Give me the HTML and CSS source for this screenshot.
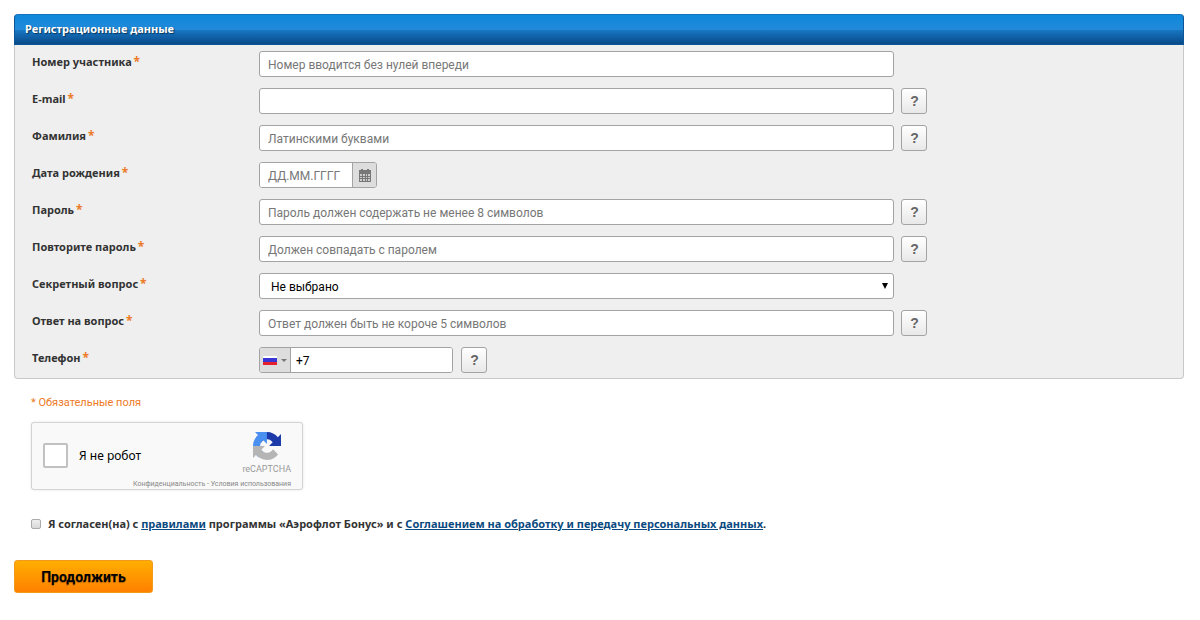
FILE: index.html
```
<!DOCTYPE html>
<html lang="ru">
<head>
  <meta charset="UTF-8" />
  <meta name="viewport" content="width=device-width, initial-scale=1.0" />
  <title>Регистрация</title>
  <link rel="stylesheet" href="styles.css">
</head>
<body>
  <form>
    <section class="panel">
      <h1 class="panel-title">Регистрационные данные</h1>
      <div class="panel-body">
        <div class="row">
          <label class="label" for="number">Номер участника <span class="req">*</span></label>
          <input class="field" type="text" id="number" placeholder="Номер вводится без нулей впереди">
        </div>
        <div class="row">
          <label class="label" for="email">E-mail <span class="req">*</span></label>
          <input class="field" type="email" id="email">
          <button class="help" type="button">?</button>
        </div>
        <div class="row">
          <label class="label" for="surname">Фамилия <span class="req">*</span></label>
          <input class="field" type="text" id="surname" placeholder="Латинскими буквами">
          <button class="help" type="button">?</button>
        </div>
        <div class="row">
          <label class="label" for="birth">Дата рождения <span class="req">*</span></label>
          <div class="group date">
            <input class="group-input" type="text" id="birth" placeholder="ДД.ММ.ГГГГ">
            <button class="addon" type="button" aria-label="Календарь">
              <svg width="12" height="13" viewBox="0 0 12 13">
                <path fill="#777" d="M0 1h2V0h2v1h4V0h2v1h2v12H0z"/>
                <path fill="#ccc" d="M1 5h2v2H1zM4 5h2v2H4zM7 5h1v2H7zM9 5h2v2H9zM1 8h2v1H1zM4 8h2v1H4zM7 8h1v1H7zM9 8h2v1H9zM1 10h2v2H1zM4 10h2v2H4zM7 10h1v2H7zM9 10h2v2H9z"/>
              </svg>
            </button>
          </div>
        </div>
        <div class="row">
          <label class="label" for="pass">Пароль <span class="req">*</span></label>
          <input class="field" type="password" id="pass" placeholder="Пароль должен содержать не менее 8 символов">
          <button class="help" type="button">?</button>
        </div>
        <div class="row">
          <label class="label" for="pass2">Повторите пароль <span class="req">*</span></label>
          <input class="field" type="password" id="pass2" placeholder="Должен совпадать с паролем">
          <button class="help" type="button">?</button>
        </div>
        <div class="row">
          <label class="label" for="question">Секретный вопрос <span class="req">*</span></label>
          <div class="select-wrap">
            <select class="select" id="question">
              <option>Не выбрано</option>
            </select>
            <svg class="select-arrow" width="6" height="6" viewBox="0 0 6 6"><path d="M0 0h6L3 6z"/></svg>
          </div>
        </div>
        <div class="row">
          <label class="label" for="answer">Ответ на вопрос <span class="req">*</span></label>
          <input class="field" type="text" id="answer" placeholder="Ответ должен быть не короче 5 символов">
          <button class="help" type="button">?</button>
        </div>
        <div class="row">
          <label class="label" for="phone">Телефон <span class="req">*</span></label>
          <div class="group phone">
            <button class="addon country" type="button" aria-label="Россия">
              <svg width="14" height="9" viewBox="0 0 14 9">
                <path fill="#fff" d="M0 0h14v3H0z"/>
                <path fill="#3a35d5" d="M0 2h14v4H0z"/>
                <path fill="#e5202e" d="M0 6h14v3H0z"/>
              </svg>
              <svg width="6" height="3" viewBox="0 0 6 3"><path fill="#777" d="M0 0h6L3 3z"/></svg>
            </button>
            <input class="group-input" type="tel" id="phone" value="+7">
          </div>
          <button class="help" type="button">?</button>
        </div>
      </div>
    </section>

    <div class="extra">
      <p class="note">* Обязательные поля</p>

      <div class="captcha">
        <label class="captcha-check"><input type="checkbox" class="captcha-box"> Я не робот</label>
        <div class="captcha-brand">
          <svg width="28" height="28" viewBox="0 0 64 64">
            <path fill="#1c3aa9" d="M64 31.955l-.033-1.37V4.687l-7.16 7.16C50.948 4.674 42.033.093 32.05.093c-10.4 0-19.622 4.96-25.458 12.64l11.736 11.86a15.55 15.55 0 0 1 4.754-5.334c2.05-1.6 4.952-2.906 8.968-2.906.485 0 .86.057 1.135.163 4.976.393 9.288 3.14 11.828 7.124l-8.307 8.307L64 31.953"/>
            <path fill="#4a90f0" d="M31.862.094l-1.37.033H4.594l7.16 7.16C4.58 13.147 0 22.06 0 32.046c0 10.4 4.96 19.622 12.64 25.458L24.5 45.768a15.55 15.55 0 0 1-5.334-4.754c-1.6-2.05-2.906-4.952-2.906-8.968 0-.485.057-.86.163-1.135.393-4.976 3.14-9.288 7.124-11.828l8.307 8.307L31.86.095"/>
            <path fill="#b5b5b5" d="M.001 32.045l.033 1.37v25.898l7.16-7.16c5.86 7.173 14.774 11.754 24.76 11.754 10.4 0 19.622-4.96 25.458-12.64l-11.736-11.86a15.55 15.55 0 0 1-4.754 5.334c-2.05 1.6-4.952 2.906-8.968 2.906-.485 0-.86-.057-1.135-.163-4.976-.393-9.288-3.14-11.828-7.124l8.307-8.307L.002 32.047"/>
          </svg>
          <span class="captcha-name">reCAPTCHA</span>
        </div>
        <div class="captcha-terms">Конфиденциальность - Условия использования</div>
      </div>

      <div class="agree">
        <input type="checkbox" class="agree-box" id="agree">
        <label for="agree">Я согласен(на) с <a href="#">правилами</a> программы «Аэрофлот Бонус» и с <a href="#">Соглашением на обработку и передачу персональных данных</a>.</label>
      </div>
    </div>

    <button class="submit" type="submit">Продолжить</button>
  </form>
</body>
</html>
```
FILE: styles.css
```
* {
  box-sizing: border-box;
}
body {
  margin: 14px 16px 14px 14px;
  background: #fff;
  color: #333;
  font-family: "Noto Sans", "Open Sans", sans-serif;
  font-size: 11px;
}
input, select, button {
  font-family: Roboto, "Noto Sans", sans-serif;
  margin: 0;
}

/* panel */
.panel {
  border: 1px solid #c8c8c8;
  border-top: 0;
  border-radius: 4px;
  background: #efefef;
}
.panel-title {
  margin: 0 -1px;
  height: 31px;
  padding: 0 10px;
  border: 1px solid #0d5596;
  border-top-color: #1673ba;
  border-radius: 4px 4px 0 0;
  background: linear-gradient(#0f88dc, #2289d8 50%, #1876c2 52%, #084a89);
  color: #fff;
  font-size: 11px;
  line-height: 28px;
  text-shadow: 1px 1px 1px #07365f;
}
.panel-body {
  display: flex;
  flex-direction: column;
  gap: 11px;
  padding: 6px 17px 5px;
}
.row {
  display: flex;
  align-items: flex-start;
}
.label {
  flex: 0 0 227px;
  font-weight: bold;
  line-height: 22px;
}
.req {
  margin-left: -1px;
  color: #ec7a26;
  font-size: 12px;
  line-height: 1;
}

/* fields */
.field, .select-wrap {
  flex: 0 1 635px;
  min-width: 0;
}
.field, .select, .group {
  height: 26px;
  border: 1px solid #a3a3a3;
  border-radius: 3px;
  background: #fff;
  color: #000;
  font-size: 12px;
}
.field {
  padding: 1px 8px 0;
}
::placeholder {
  color: #777;
  opacity: 1;
}
.select-wrap {
  position: relative;
}
.select {
  display: block;
  width: 100%;
  padding: 1px 11px 0;
  appearance: none;
}
.select-arrow {
  position: absolute;
  top: 10px;
  right: 6px;
  pointer-events: none;
}
.group {
  display: flex;
  overflow: hidden;
}
.date {
  width: 118px;
}
.phone {
  width: 194px;
}
.group-input {
  flex: 1;
  min-width: 0;
  padding: 1px 5px 0;
  border: 0;
  font-size: 12px;
}
.date .group-input {
  padding-left: 8px;
}
.addon {
  display: flex;
  align-items: center;
  justify-content: center;
  width: 24px;
  padding: 0;
  border: 0;
  border-left: 1px solid #a3a3a3;
  background: #ddd;
}
.country {
  gap: 4px;
  width: 31px;
  border-left: 0;
  border-right: 1px solid #a3a3a3;
}
.help {
  width: 26px;
  height: 26px;
  margin-left: 7px;
  padding: 0 0 0 1px;
  border: 1px solid #a3a3a3;
  border-radius: 3px;
  background: linear-gradient(#fff, #e8e8e8);
  color: #666;
  font-family: "Liberation Sans", Arial, sans-serif;
  font-size: 14px;
  font-weight: bold;
}
.phone + .help {
  margin-left: 8px;
}

/* below the panel */
.extra {
  padding: 0 17px;
}
.note {
  margin: 16px 0 11px;
  color: #ec7a26;
  font-family: Roboto, "Noto Sans", sans-serif;
  font-size: 11px;
  line-height: 16px;
}
.captcha {
  display: grid;
  grid-template-columns: 1fr auto;
  width: 272px;
  height: 68px;
  padding: 9px 11px 0;
  border: 1px solid #d3d3d3;
  border-radius: 3px;
  background: #f9f9f9;
  box-shadow: 0 0 3px rgba(0, 0, 0, 0.1);
}
.captcha-check {
  display: flex;
  align-items: center;
  gap: 11px;
  color: #000;
  font-size: 12px;
}
.captcha-box {
  width: 25px;
  height: 25px;
  border: 2px solid #c1c1c1;
  border-radius: 2px;
  background: #fff;
  appearance: none;
}
.captcha-brand {
  display: flex;
  flex-direction: column;
  align-items: center;
}
.captcha-name {
  color: #999;
  font-family: Roboto, sans-serif;
  font-size: 9px;
  line-height: 18px;
}
.captcha-terms {
  grid-column: 1 / 3;
  color: #888;
  font-family: Roboto, sans-serif;
  font-size: 7px;
  line-height: 8px;
  text-align: right;
}
.agree {
  display: flex;
  align-items: center;
  gap: 7px;
  margin-top: 26px;
  font-weight: bold;
  line-height: 16px;
}
.agree a {
  color: #0b4a80;
}
.agree-box {
  width: 10px;
  height: 10px;
  border: 1px solid #aaa;
  border-radius: 2px;
  background: linear-gradient(#eee, #d8d8d8);
  appearance: none;
}
.submit {
  width: 139px;
  height: 33px;
  margin-top: 28px;
  padding: 0;
  border: 1px solid #f29a1c;
  border-radius: 3px;
  background: linear-gradient(#ffae00, #ff8000);
  color: #000;
  font-size: 14px;
  font-weight: bold;
  text-shadow: 0 1px 1px rgba(0, 0, 0, 0.3);
}
```
